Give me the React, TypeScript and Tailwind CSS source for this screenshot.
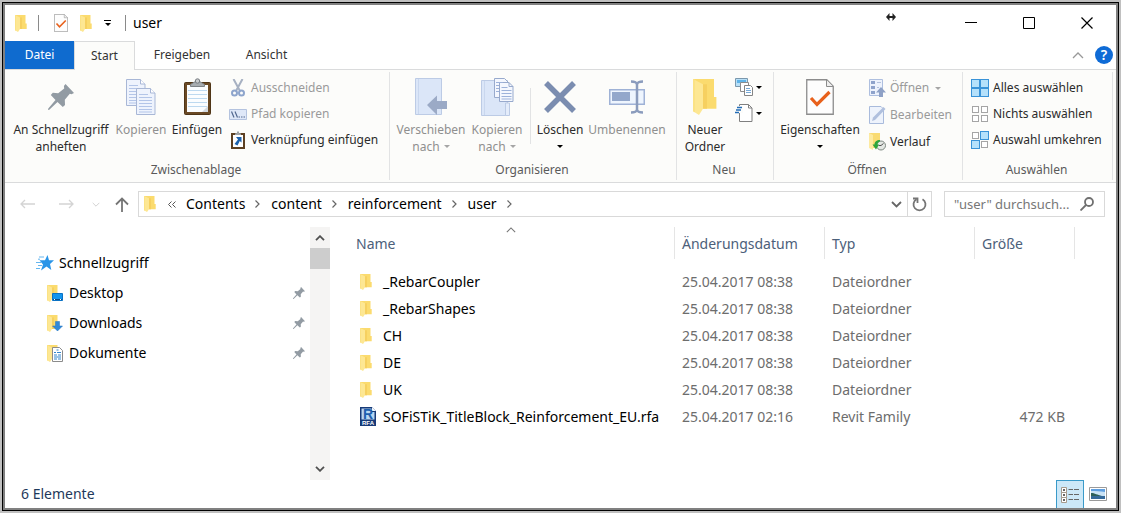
import type { ReactNode } from "react";

const files = [
  { name: "_RebarCoupler", date: "25.04.2017 08:38", type: "Dateiordner", size: "" },
  { name: "_RebarShapes", date: "25.04.2017 08:38", type: "Dateiordner", size: "" },
  { name: "CH", date: "25.04.2017 08:38", type: "Dateiordner", size: "" },
  { name: "DE", date: "25.04.2017 08:38", type: "Dateiordner", size: "" },
  { name: "UK", date: "25.04.2017 08:38", type: "Dateiordner", size: "" },
  {
    name: "SOFiSTiK_TitleBlock_Reinforcement_EU.rfa",
    date: "25.04.2017 02:16",
    type: "Revit Family",
    size: "472 KB",
  },
];

const crumbs = ["Contents", "content", "reinforcement", "user"];

/* ---------- icons ---------- */

function FolderShape() {
  return (
    <>
      <path d="M0 0h10.500v8.500h1.200v5.500H5L3 12z" fill="#fbdb6e" />
      <path d="M5 2.500h2V14H5z" fill="#f6d060" />
      <path d="M0 0l5 2.500V14l-2 3-3-1.800z" fill="#fde793" />
      <path d="M0 0l1 .5v15.200l-1-.5z" fill="#fbe285" />
    </>
  );
}

function FolderIcon({ className = "h-[17px] w-3" }: { className?: string }) {
  return (
    <svg className={className} viewBox="0 0 12 17" preserveAspectRatio="none">
      <FolderShape />
    </svg>
  );
}

function CheckDocIcon({ className }: { className: string }) {
  return (
    <svg className={className} viewBox="0 0 28 36" fill="none">
      <path d="M.75.75h20l6.5 6.5v28H.75z" fill="#fdfdfd" stroke="#8c8c8c" strokeWidth="1.3" />
      <path d="M20.5 1v6.5H27" fill="#eee" stroke="#8c8c8c" />
      <path d="M5 19l6 6.5L23.500 13" stroke="#e8611c" strokeWidth="3.2" />
    </svg>
  );
}

function Caret({ className = "text-black" }: { className?: string }) {
  return (
    <svg className={`h-[3px] w-[6px] shrink-0 ${className}`} viewBox="0 0 6 3">
      <path d="M0 0h6L3 3z" fill="currentColor" />
    </svg>
  );
}

function Chevron({ className }: { className: string }) {
  return (
    <svg className={className} viewBox="0 0 12 7" fill="none" stroke="currentColor" strokeWidth="1.300">
      <path d="M1 6l5-5 5 5" />
    </svg>
  );
}

function PinIcon({ className }: { className: string }) {
  return (
    <svg className={className} viewBox="0 0 26 26" fill="#929ba3">
      <path d="M17.500 0L26 9l-2.500 1.200-1.700-.4-5 6 .2 5.200-2.200 2L9.500 18 1.300 25.800 0 26l.3-1.500L7.500 16 2.800 11l2-2.200 5.400.4 6-4.700-.3-2.500z" />
    </svg>
  );
}

function PageShape({ x, y }: { x: number; y: number }) {
  return (
    <g transform={`translate(${x} ${y})`}>
      <path d="M.5.5h14l4.500 4.500v21.500H.5z" fill="#eef3fd" stroke="#a8b7d6" />
      <path d="M14.500.5V5H19" fill="#fff" stroke="#a8b7d6" />
      <path d="M3 6.500h9M3 9.500h13M3 12.500h13M3 15.500h13M3 18.500h13M3 21.500h13M3 24h13" stroke="#b3c5e8" />
    </g>
  );
}

function CopyIcon() {
  return (
    <svg className="h-9 w-[30px]" viewBox="0 0 30 36">
      <PageShape x={0} y={0} />
      <PageShape x={10} y={9} />
    </svg>
  );
}

function PasteIcon() {
  return (
    <svg className="h-[37px] w-[27px]" viewBox="0 0 27 37">
      <rect x=".5" y="4.500" width="26" height="32" rx="1" fill="#6b4a25" stroke="#4f3517" />
      <path d="M3 7h21v27H3z" fill="#fbfdff" />
      <path d="M4 12.500h19M4 16.500h19M4 20.500h19M4 24.500h19M4 28.500h19" stroke="#bdd9f0" />
      <path d="M18 34l6-6v6z" fill="#d4dae0" />
      <path d="M6.500 8.500v-2l4-2.500h6l4 2.500v2z" fill="#a7acb0" stroke="#7d8286" />
      <circle cx="13.500" cy="3" r="2.200" fill="#c9ccce" stroke="#777c80" />
    </svg>
  );
}

function ScissorsIcon() {
  return (
    <svg className="h-[18px] w-[14px]" viewBox="0 0 14 18" fill="none">
      <path d="M2.500 0l6.500 12M11.500 0L5 12" stroke="#a7b1c2" strokeWidth="2" />
      <circle cx="3.500" cy="14" r="2.500" stroke="#8ea5cc" strokeWidth="2" />
      <circle cx="10.500" cy="14" r="2.500" stroke="#8ea5cc" strokeWidth="2" />
    </svg>
  );
}

function PathIcon() {
  return (
    <svg className="h-[11px] w-[18px]" viewBox="0 0 18 11" fill="none">
      <path d="M.5.5h17v10H.5z" fill="#dfe8f8" stroke="#b4c3df" />
      <path d="M2.500 2.500l2.500 6M6 2.500l2.500 6" stroke="#53698f" strokeWidth="1.200" />
      <path d="M9.500 8h1.500M12 8h1.500M14.500 8H16" stroke="#53698f" strokeWidth="1.200" />
    </svg>
  );
}

function PasteLinkIcon() {
  return (
    <svg className="h-[18px] w-[14px]" viewBox="0 0 14 18">
      <path d="M0 2h14v16H0z" fill="#5d4022" />
      <path d="M2 4h10v12H2z" fill="#fff" />
      <path d="M4 4V2.500L6 2V.5h2V2l2 .5V4z" fill="#9ea2a5" />
      <path d="M5 6h5.500v5.500L8.800 10 6.500 14.500 3.500 13l3.500-4.500z" fill="#1c62ad" />
    </svg>
  );
}

function MoveToIcon() {
  return (
    <svg className="h-[37px] w-8" viewBox="0 0 32 37">
      <path d="M.5.5h26v36H.5z" fill="#dbe6f8" stroke="#bccbe5" />
      <path d="M3.500 1v35" stroke="#c9d7ee" />
      <path d="M12 27l10-9.500V23h10v8H22v6z" fill="#9baac6" />
    </svg>
  );
}

function CopyToIcon() {
  return (
    <svg className="h-[38px] w-[33px]" viewBox="0 0 33 38">
      <path d="M.5 2.500h26v35H.5z" fill="#dbe6f8" stroke="#bccbe5" />
      <path d="M3.500 3v34" stroke="#c9d7ee" />
      <path d="M24.500 25h4v12.500h-4z" fill="#e4ecfa" stroke="#bccbe5" />
      <path d="M13.500.5h10l4 4v15h-14z" fill="#f4f7fe" stroke="#98aacd" />
      <path d="M18.500 4.500h9.500l4 4v15H18.500z" fill="#f4f7fe" stroke="#98aacd" />
      <path d="M28 4.500v4h4" fill="none" stroke="#98aacd" />
      <path d="M15 4.500h7M15 7.500h3M15 10.500h3M15 13.500h3M20.500 9.500h6M20.500 12.500h10M20.500 15.500h10M20.500 18.500h10M20.500 21h10" stroke="#9db2da" />
    </svg>
  );
}

function DeleteIcon() {
  return (
    <svg className="h-8 w-8" viewBox="0 0 32 32">
      <path d="M2 2l28 28M30 2L2 30" stroke="#7b8db0" strokeWidth="5.500" />
    </svg>
  );
}

function RenameIcon() {
  return (
    <svg className="h-[34px] w-9" viewBox="0 0 36 34" fill="none">
      <path d="M.75 9.750h34.500v14.500H.75z" fill="#eef5fe" stroke="#9fb2d6" strokeWidth="1.500" />
      <path d="M3 12h18v9H3z" fill="#93a7cb" />
      <path d="M22 1.500c4 0 5.500.5 6 3 .5-2.500 2-3 6-3M22 32.500c4 0 5.500-.5 6-3 .5 2.500 2 3 6 3M28 4v26" stroke="#8b9cbd" strokeWidth="2.500" />
    </svg>
  );
}

function NewItemIcon() {
  return (
    <svg className="h-[18px] w-[18px]" viewBox="0 0 18 18">
      <path d="M.5.5h12v8H.5z" fill="#b8e0f8" stroke="#7b98ad" />
      <path d="M2 2h9v3H2z" fill="#5fb3e8" />
      <path d="M5.500 4.500h8v9h-8z" fill="#fff" stroke="#8c8c8c" />
      <path d="M9.500 7.500h6l2 2v8h-8z" fill="#fff" stroke="#848484" />
      <path d="M11 10.500h4M11 12.500h5M11 14.500h5" stroke="#77a9d6" />
    </svg>
  );
}

function EasyAccessIcon() {
  return (
    <svg className="h-[18px] w-[18px]" viewBox="0 0 18 18" fill="none">
      <path d="M4.500.5h9l3.500 3.500v13.500H4.500z" fill="#fff" stroke="#808080" />
      <path d="M13.500.5V4H17" stroke="#808080" />
      <path d="M1 2h7v7H1z" fill="#fcfcfa" />
      <path d="M2 3.500h5M1 6h5M0 8.500h4" stroke="#246db6" strokeWidth="1.300" />
    </svg>
  );
}

function OpenIcon() {
  return (
    <svg className="h-[18px] w-[17px]" viewBox="0 0 17 18">
      <path d="M.5.5h13v16H.5z" fill="#edf2fc" stroke="#aebfdf" />
      <path d="M2 2h4v3H2zM2 7h4v3H2zM2 12h4v3H2z" fill="#8fa3cb" />
      <path d="M8 3.500h4M8 8.500h2" stroke="#b3c1dc" />
      <path d="M12 8l5 5.500h-3V18h-4v-4.500H7z" fill="#8ea1c6" />
    </svg>
  );
}

function EditIcon() {
  return (
    <svg className="h-[18px] w-[17px]" viewBox="0 0 17 18">
      <path d="M.5.5H12l2.500 2.500v14.500H.5z" fill="#eef3fc" stroke="#a9bbdc" />
      <path d="M3 15l1-3.500L14.500 1l2 2L6 14z" fill="#b0c0de" />
    </svg>
  );
}

function HistoryIcon() {
  return (
    <svg className="h-[18px] w-[17px]" viewBox="0 0 17 18">
      <path d="M0 0h11v15H0z" fill="#f9db73" />
      <path d="M0 0l4 2v15l-4-2z" fill="#fdeaa0" />
      <circle cx="12" cy="12.500" r="4.500" fill="#e4e8e4" stroke="#7d8881" />
      <path d="M12 12.500l2.500-2M12 12.500H9.500" stroke="#555" />
      <path d="M11 7C7.500 7 5.500 9 5.500 11.500H3.500l3.500 5 3-5H8.500c0-1.500 1-2.500 2.500-3z" fill="#2ca53c" />
    </svg>
  );
}

function SelectIcon({ on }: { on: boolean[] }) {
  const spots = [
    [0, 0],
    [9, 0],
    [0, 9],
    [9, 9],
  ];
  return (
    <svg className="h-[18px] w-[18px]" viewBox="0 0 18 18">
      {spots.map(([x, y], i) =>
        on[i] ? (
          <rect key={i} x={x + 0.5} y={y + 0.5} width="8" height="8" fill="#b5e1fb" stroke="#3a93d8" />
        ) : (
          <rect key={i} x={x + 1.5} y={y + 1.5} width="6" height="6" fill="#fff" stroke="#a5a5a5" />
        )
      )}
    </svg>
  );
}

function StarIcon() {
  return (
    <svg className="h-4 w-[18px]" viewBox="0 0 18 16">
      <path d="M11.500 0l1.500 5.200h5L14 9l1.300 6-4.800-3.400L5 15.500l2-6L3.500 5.200H9z" fill="#2a95e8" />
      <path d="M3 2h5M2 4.200h2M0 7.500h5M2 10.500h4M0 13.500h4" stroke="#65b6ef" />
    </svg>
  );
}

function DesktopIcon() {
  return (
    <svg className="h-[17px] w-4" viewBox="0 0 16 17">
      <FolderShape />
      <path d="M5.500 8.500h10v7h-10z" fill="#1495ee" stroke="#0b72c4" />
      <path d="M6 14.500h9" stroke="#0c4f8d" />
      <path d="M7 14.500h1M13 14.500h1" stroke="#fff" />
    </svg>
  );
}

function DownloadsIcon() {
  return (
    <svg className="h-[17px] w-4" viewBox="0 0 16 17">
      <FolderShape />
      <path d="M8.500 6.500h4v4.500H15.500l-5 5-5-5h3z" fill="#3189d8" stroke="#2373bd" strokeWidth=".5" />
    </svg>
  );
}

function DocumentsIcon() {
  return (
    <svg className="h-[17px] w-4" viewBox="0 0 16 17">
      <FolderShape />
      <path d="M5.500 2.500h7l3 3v11h-10z" fill="#fff" stroke="#8b8b8b" />
      <path d="M9.500 5h2M7 7.500h2M10 7.500h4M7 10h3M11 10h3M7 12h7M7 14h3M11 14h3" stroke="#3386cd" />
    </svg>
  );
}

function RevitIcon() {
  return (
    <svg className="h-[19px] w-4" viewBox="0 0 16 19" fontFamily="Liberation Sans" fontWeight="bold" textAnchor="middle">
      <path d="M0 0h12l4 4v15H0z" fill="#173a78" />
      <path d="M1.500 1.500h10V5h3v7.500h-13z" fill="#b9d6f2" />
      <path d="M12 0v4h4z" fill="#f1f6fc" />
      <text x="8" y="12" fontSize="14" fill="#1e5fae">
        R
      </text>
      <text x="8" y="18" fontSize="6" fill="#fff">
        RFA
      </text>
    </svg>
  );
}

/* ---------- ribbon pieces ---------- */

type GroupProps = { label: string; className: string; inset?: string; children: ReactNode };

function Group({ label, className, inset = "", children }: GroupProps) {
  return (
    <section className={`flex shrink-0 flex-col border-r border-[#e2e3e4] ${className}`} aria-label={label}>
      <div className={`flex h-[90px] items-start ${inset}`}>{children}</div>
      <div className="pr-0.5 text-center leading-5 text-[#5a5a5a]">{label}</div>
    </section>
  );
}

type BigButtonProps = { icon: ReactNode; label: string; second?: ReactNode; className: string; disabled?: boolean };

function BigButton({ icon, label, second, className, disabled }: BigButtonProps) {
  return (
    <button
      disabled={disabled}
      className={`flex shrink-0 flex-col items-center whitespace-nowrap leading-[17px] disabled:text-[#8f8f8f] ${className}`}
    >
      <span className="mt-1 mb-1 flex h-[41px] items-center justify-center">{icon}</span>
      <span>{label}</span>
      <span className="flex h-[17px] items-center gap-1">{second}</span>
    </button>
  );
}

function SmallButton({
  icon,
  label,
  menu,
  disabled,
}: {
  icon: ReactNode;
  label: string;
  menu?: boolean;
  disabled?: boolean;
}) {
  return (
    <button disabled={disabled} className="flex h-[26px] items-center gap-1 whitespace-nowrap disabled:text-[#9a9a9a]">
      <span className="flex w-[18px] justify-center">{icon}</span>
      {label}
      {menu && <Caret className="ml-0.5 text-[#a5a5a5]" />}
    </button>
  );
}

function Ribbon() {
  return (
    <div className="flex h-[113px] border-b border-[#dadbdc] bg-[#fcfcfa] pt-0.5 pb-0.5 text-xs text-[#2b2b2b]">
      <Group label="Zwischenablage" className="w-[385px]" inset="pl-1">
        <BigButton icon={<PinIcon className="h-[26px] w-[26px]" />} label="An Schnellzugriff" second="anheften" className="w-[104px]" />
        <BigButton icon={<CopyIcon />} label="Kopieren" className="w-14" disabled />
        <BigButton icon={<PasteIcon />} label="Einfügen" className="w-14" />
        <div className="ml-1 flex flex-col items-start pt-[3px]">
          <SmallButton icon={<ScissorsIcon />} label="Ausschneiden" disabled />
          <SmallButton icon={<PathIcon />} label="Pfad kopieren" disabled />
          <SmallButton icon={<PasteLinkIcon />} label="Verknüpfung einfügen" />
        </div>
      </Group>
      <Group label="Organisieren" className="w-[287px]" inset="pl-1">
        <BigButton
          icon={<MoveToIcon />}
          label="Verschieben"
          second={<>nach <Caret className="text-[#a5a5a5]" /></>}
          className="w-[74px]"
          disabled
        />
        <BigButton
          icon={<CopyToIcon />}
          label="Kopieren"
          second={<>nach <Caret className="text-[#a5a5a5]" /></>}
          className="w-[58px]"
          disabled
        />
        <div className="mx-1 mt-4 h-14 w-px bg-[#e2e3e4]" />
        <BigButton icon={<DeleteIcon />} label="Löschen" second={<Caret />} className="w-[50px]" />
        <BigButton icon={<RenameIcon />} label="Umbenennen" className="w-[84px]" disabled />
      </Group>
      <Group label="Neu" className="w-[97px]">
        <BigButton icon={<FolderIcon className="h-9 w-6" />} label="Neuer" second="Ordner" className="w-14" />
        <div className="ml-0.5 flex flex-col pt-0.5">
          <button aria-label="Neues Element" className="flex h-[26px] items-center gap-[3px]">
            <NewItemIcon />
            <Caret />
          </button>
          <button aria-label="Einfacher Zugriff" className="flex h-[26px] items-center gap-[3px]">
            <EasyAccessIcon />
            <Caret />
          </button>
        </div>
      </Group>
      <Group label="Öffnen" className="w-[189px]" inset="pl-0.5">
        <BigButton icon={<CheckDocIcon className="h-9 w-7" />} label="Eigenschaften" second={<Caret />} className="w-[88px]" />
        <div className="ml-1 flex flex-col items-start gap-px pt-[3px]">
          <SmallButton icon={<OpenIcon />} label="Öffnen" menu disabled />
          <SmallButton icon={<EditIcon />} label="Bearbeiten" disabled />
          <SmallButton icon={<HistoryIcon />} label="Verlauf" />
        </div>
      </Group>
      <Group label="Auswählen" className="w-[150px]" inset="pl-2">
        <div className="flex flex-col items-start pt-[3px]">
          <SmallButton icon={<SelectIcon on={[true, true, true, true]} />} label="Alles auswählen" />
          <SmallButton icon={<SelectIcon on={[false, false, false, false]} />} label="Nichts auswählen" />
          <SmallButton icon={<SelectIcon on={[false, true, true, false]} />} label="Auswahl umkehren" />
        </div>
      </Group>
    </div>
  );
}

/* ---------- window parts ---------- */

function TitleBar() {
  return (
    <header className="flex h-9 items-center pl-2.5 text-sm text-black">
      <FolderIcon />
      <div className="ml-[11px] h-4 w-px bg-[#8a8a8a]" />
      <button aria-label="Eigenschaften" className="ml-[15px]">
        <CheckDocIcon className="h-[18px] w-[14px]" />
      </button>
      <button aria-label="Neuer Ordner" className="ml-3">
        <FolderIcon />
      </button>
      <button aria-label="Symbolleiste anpassen" className="ml-3 flex flex-col items-center gap-0.5">
        <span className="h-px w-[7px] bg-black" />
        <Caret />
      </button>
      <div className="ml-3.5 h-4 w-px bg-[#8a8a8a]" />
      <h1 className="ml-[7px]">user</h1>
      <svg className="mb-3 ml-auto h-2 w-2.5 shrink-0" viewBox="0 0 10 8">
        <path d="M0 4l3.500-4v3h3V0L10 4 6.500 8V5h-3v3z" fill="#222" />
      </svg>
      <div className="ml-[46px] flex text-black">
        <button aria-label="Minimieren" className="flex h-9 w-[58px] items-center justify-center">
          <svg className="h-3 w-3" viewBox="0 0 12 12">
            <path d="M0 5.500h12" stroke="currentColor" />
          </svg>
        </button>
        <button aria-label="Maximieren" className="flex h-9 w-[58px] items-center justify-center">
          <svg className="h-3 w-3" viewBox="0 0 12 12">
            <path d="M.5.5h11v11H.5z" fill="none" stroke="currentColor" />
          </svg>
        </button>
        <button aria-label="Schließen" className="flex h-9 w-[58px] items-center justify-center">
          <svg className="h-3 w-3" viewBox="0 0 12 12">
            <path d="M.5.5l11 11M11.500.5l-11 11" stroke="currentColor" strokeWidth="1.200" />
          </svg>
        </button>
      </div>
    </header>
  );
}

function Tabs() {
  return (
    <nav className="flex h-[29px] text-xs text-[#333]">
      <button className="w-[69px] border-b border-[#dadbdc] bg-[#0f6bcf] text-white">Datei</button>
      <button className="w-[61px] border-x border-t border-[#dadbdc] bg-[#fcfcfa]">Start</button>
      <div className="flex grow items-center border-b border-[#dadbdc] pr-[3px]">
        <button className="w-[94px]">Freigeben</button>
        <button className="w-[75px]">Ansicht</button>
        <button aria-label="Menüband minimieren" className="ml-auto text-[#999]">
          <Chevron className="h-[7px] w-3" />
        </button>
        <button
          aria-label="Hilfe"
          className="ml-[11px] flex h-[18px] w-[18px] items-center justify-center rounded-full bg-[#0f6bd6] text-sm font-semibold text-white"
        >
          ?
        </button>
      </div>
    </nav>
  );
}

function AddressBar() {
  return (
    <div className="flex h-11 items-center pr-[11px] pb-0.5 pl-[15px] text-sm text-black">
      <button aria-label="Zurück" disabled>
        <svg className="h-[10px] w-[15px]" viewBox="0 0 15 10" fill="none" stroke="#d4d4d4" strokeWidth="1.300">
          <path d="M15 5H1M5 1L1 5l4 4" />
        </svg>
      </button>
      <button aria-label="Vorwärts" disabled className="ml-6">
        <svg className="h-[10px] w-[15px]" viewBox="0 0 15 10" fill="none" stroke="#d4d4d4" strokeWidth="1.300">
          <path d="M0 5h14M10 1l4 4-4 4" />
        </svg>
      </button>
      <button aria-label="Verlauf" className="ml-[18px] text-[#ccc]">
        <Chevron className="h-[5px] w-2 rotate-180" />
      </button>
      <button aria-label="Nach oben" className="ml-[15px]">
        <svg className="h-[15px] w-[14px]" viewBox="0 0 14 15" fill="none" stroke="#757575" strokeWidth="1.800">
          <path d="M7 15V2M1 7.500l6-6 6 6" />
        </svg>
      </button>
      <div className="ml-[9px] flex h-[26px] grow items-center border border-[#d9d9d9] pl-[5px]">
        <FolderIcon className="h-4 w-3" />
        <svg className="ml-3 h-[7px] w-2" viewBox="0 0 8 7" fill="none" stroke="#555">
          <path d="M3.500.5l-3 3 3 3M7.500.5l-3 3 3 3" />
        </svg>
        <ol className="ml-2.5 flex">
          {crumbs.map((c) => (
            <li key={c} className="flex items-center">
              <a href="#">{c}</a>
              <svg className="mr-[11px] ml-2.5 h-2 w-[5px]" viewBox="0 0 5 8" fill="none" stroke="#666" strokeWidth="1.200">
                <path d="M.5.5L4 4 .5 7.500" />
              </svg>
            </li>
          ))}
        </ol>
        <button aria-label="Frühere Orte" className="mr-[5px] ml-auto text-[#666]">
          <svg className="h-[7px] w-[11px]" viewBox="0 0 11 7" fill="none" stroke="currentColor" strokeWidth="1.800">
            <path d="M1 1l4.500 4.500L10 1" />
          </svg>
        </button>
        <button aria-label="Aktualisieren" className="flex h-6 w-6 items-center justify-center border-l border-[#d9d9d9]">
          <svg className="h-[15px] w-[15px]" viewBox="0 0 15 15" fill="none" stroke="#757575" strokeWidth="1.800">
            <path d="M10.500 2.200a6 6 0 1 1-6 0" />
            <path d="M1 1.500h4.500V6" />
          </svg>
        </button>
      </div>
      <label className="ml-3 flex h-[26px] w-[161px] items-center border border-[#d9d9d9] pr-2.5 pl-[9px]">
        <input
          aria-label="user durchsuchen"
          placeholder={'"user" durchsuch...'}
          className="w-0 grow text-[13px] outline-none placeholder:text-[#777]"
        />
        <svg className="h-[14px] w-[14px] shrink-0" viewBox="0 0 14 14" fill="none" stroke="#707070" strokeWidth="1.800">
          <circle cx="9" cy="5" r="4" />
          <path d="M6 8L.5 13.500" />
        </svg>
      </label>
    </div>
  );
}

function NavItem({ icon, label }: { icon: ReactNode; label: string }) {
  return (
    <li className="flex h-[30px] items-center pr-[5px] pl-[42px]">
      {icon}
      <a href="#" className="ml-1.5">
        {label}
      </a>
      <PinIcon className="ml-auto h-3 w-3" />
    </li>
  );
}

function NavPane() {
  return (
    <aside className="flex w-[325px] shrink-0 text-sm text-black">
      <ul className="grow pt-[21px]">
        <li className="flex h-[30px] items-center gap-[5px] pl-[31px]">
          <StarIcon />
          <a href="#">Schnellzugriff</a>
        </li>
        <NavItem icon={<DesktopIcon />} label="Desktop" />
        <NavItem icon={<DownloadsIcon />} label="Downloads" />
        <NavItem icon={<DocumentsIcon />} label="Dokumente" />
      </ul>
      <div className="flex w-5 flex-col items-center bg-[#f5f4f3]">
        <svg className="mt-2 mb-[7px] h-[6px] w-[10px]" viewBox="0 0 10 6" fill="none" stroke="#505050" strokeWidth="1.800">
          <path d="M1 5.200l4-4 4 4" />
        </svg>
        <div className="h-[21px] w-full bg-[#cdcdcd]" />
        <svg className="mt-auto mb-2 h-[6px] w-[10px]" viewBox="0 0 10 6" fill="none" stroke="#505050" strokeWidth="1.800">
          <path d="M1 .8l4 4 4-4" />
        </svg>
      </div>
    </aside>
  );
}

function FileList() {
  return (
    <div className="grow pl-5">
      <table className="w-[725px] table-fixed text-left text-sm text-[#6d6d6d]">
        <colgroup>
          <col className="w-[325px]" />
          <col className="w-[150px]" />
          <col className="w-[150px]" />
          <col className="w-[100px]" />
        </colgroup>
        <thead className="text-[#4c607a]">
          <tr className="h-[41px] align-top">
            <th className="relative font-normal">
              <div className="h-8 border-r border-[#e5e5e5] pl-1.5 leading-[34px]">Name</div>
              <Chevron className="absolute top-0 left-[156px] h-[6px] w-[10px] text-[#777]" />
            </th>
            <th className="font-normal">
              <div className="h-8 border-r border-[#e5e5e5] pl-[7px] leading-[34px]">Änderungsdatum</div>
            </th>
            <th className="font-normal">
              <div className="h-8 border-r border-[#e5e5e5] pl-[7px] leading-[34px]">Typ</div>
            </th>
            <th className="font-normal">
              <div className="h-8 border-r border-[#e5e5e5] pl-[7px] leading-[34px]">Größe</div>
            </th>
          </tr>
        </thead>
        <tbody>
          {files.map((f) => (
            <tr key={f.name} className="h-[27px]">
              <td className="pl-2.5">
                <span className="flex items-center text-black">
                  <span className="w-[23px]">{f.size ? <RevitIcon /> : <FolderIcon className="h-4 w-3" />}</span>
                  {f.name}
                </span>
              </td>
              <td className="pl-[7px]">{f.date}</td>
              <td className="pl-[7px]">{f.type}</td>
              <td className="pr-2.5 text-right">{f.size}</td>
            </tr>
          ))}
        </tbody>
      </table>
    </div>
  );
}

function StatusBar() {
  return (
    <footer className="flex h-7 items-center pr-[9px] pl-4 text-sm text-[#1e395b]">
      <span>6 Elemente</span>
      <button
        aria-label="Details"
        className="ml-auto flex h-7 w-7 items-center justify-center border border-b-0 border-[#3a9ac9] bg-[#cce8f8]"
      >
        <svg className="h-4 w-[18px]" viewBox="0 0 18 16" fill="none">
          <path d="M.5.5h5v5h-5zM.5 5.500h5v5h-5zM.5 10.500h5v5h-5z" fill="#fff" stroke="#a59a8c" />
          <path d="M2 3h2M2 8h2M2 13h2" stroke="#333" strokeWidth="1.500" />
          <path d="M7.500 2.500h4.500M13 2.500h5M7.500 7.500h4.500M13 7.500h5M7.500 12.500h4.500M13 12.500h5" stroke="#666" />
        </svg>
      </button>
      <button aria-label="Große Symbole" className="ml-[5px]">
        <svg className="h-[14px] w-[18px]" viewBox="0 0 18 14">
          <path d="M.5.5h17v13H.5z" fill="#fff" stroke="#9a9a9a" />
          <path d="M2 2h14v10H2z" fill="#5f9fe0" />
          <path d="M2 4c5 0 9 0 14 1v4H2z" fill="#c9e2f5" />
          <path d="M2 6c4 0 6 2 11 3H2z" fill="#2e6058" />
          <path d="M2 9h14v3H2z" fill="#35699a" />
        </svg>
      </button>
    </footer>
  );
}

export default function App() {
  return (
    <div className="flex min-h-screen bg-[#c0c0c0] p-0.5 font-['Noto_Sans','Open_Sans',sans-serif]">
      <div className="flex grow border border-black">
        <div className="flex grow flex-col border-2 border-[#808080] bg-white">
          <TitleBar />
          <Tabs />
          <Ribbon />
          <AddressBar />
          <main className="flex min-h-[252px] grow">
            <NavPane />
            <FileList />
          </main>
          <StatusBar />
        </div>
      </div>
    </div>
  );
}
